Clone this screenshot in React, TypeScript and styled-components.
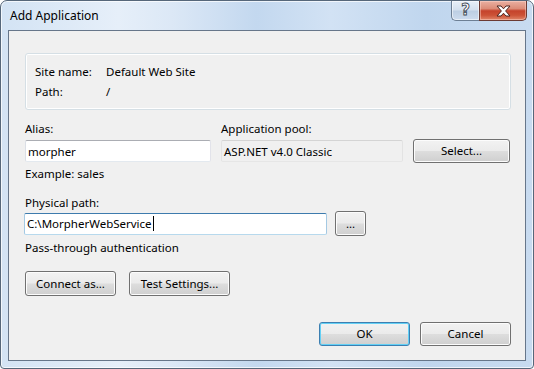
import styled, { createGlobalStyle } from "styled-components";

const GlobalStyle = createGlobalStyle`
  html, body {
    margin: 0;
    padding: 0;
    background: #ffffff;
  }
  body {
    font-family: "Noto Sans", "Open Sans", sans-serif;
    font-size: 11.5px;
    color: #000000;
  }
  * {
    box-sizing: border-box;
  }
`;

function CloseIcon() {
  return (
    <svg width="15" height="12" viewBox="0 0 15 12">
      <path
        d="M1 1 H5 L7.5 3.8 L10 1 H14 L9.6 6 L14 11 H10 L7.5 8.2 L5 11 H1 L5.4 6 Z"
        fill="#ffffff"
        stroke="#4a2520"
        strokeWidth="1"
        strokeLinejoin="round"
      />
    </svg>
  );
}

function App() {
  return (
    <>
      <GlobalStyle />
      <Window>
        <TitleBar>
          <Title>Add Application</Title>
          <CaptionButtons>
            <HelpButton>?</HelpButton>
            <CloseButton>
              <CloseIcon />
            </CloseButton>
          </CaptionButtons>
        </TitleBar>

        <Client>
          <GroupBox>
            <InfoGrid>
              <span>Site name:</span>
              <span>Default Web Site</span>
              <span>Path:</span>
              <span>/</span>
            </InfoGrid>
          </GroupBox>

          <AliasGrid>
            <Label>Alias:</Label>
            <Label>Application pool:</Label>
            <span />
            <TextBox>morpher</TextBox>
            <TextBox $readOnly>ASP.NET v4.0 Classic</TextBox>
            <Button $w={97} $h={24}>
              Select...
            </Button>
          </AliasGrid>

          <Hint>Example: sales</Hint>

          <SectionLabel>Physical path:</SectionLabel>
          <PathRow>
            <TextBox $focused $w={303}>
              C:\MorpherWebService
              <Caret />
            </TextBox>
            <Button $w={31} $h={25}>
              ...
            </Button>
          </PathRow>

          <Hint>Pass-through authentication</Hint>

          <ButtonRow>
            <Button $w={91} $h={25}>
              Connect as...
            </Button>
            <Button $w={101} $h={25}>
              Test Settings...
            </Button>
          </ButtonRow>

          <Footer>
            <Button $w={91} $h={24} $default>
              OK
            </Button>
            <Button $w={91} $h={24}>
              Cancel
            </Button>
          </Footer>
        </Client>
      </Window>
    </>
  );
}

export default App;

const Window = styled.div`
  width: 534px;
  height: 369px;
  display: flex;
  flex-direction: column;
  border: 1px solid #56677a;
  border-radius: 7px 7px 4px 4px;
  background: linear-gradient(
    to right,
    #d3e3f4 0%,
    #e6eff9 22%,
    #dce8f6 32%,
    #c3d8ef 48%,
    #d2e2f4 62%,
    #c0d6ee 80%,
    #c8dbf0 100%
  );
  box-shadow: inset 0 0 0 1px rgba(255, 255, 255, 0.7);
  overflow: hidden;
`;

const TitleBar = styled.div`
  height: 29px;
  display: flex;
  align-items: flex-start;
  padding: 0 6px 0 9px;
`;

const Title = styled.div`
  margin-top: 7px;
  line-height: 16px;
  font-size: 12px;
  color: #000000;
`;

const CaptionButtons = styled.div`
  display: flex;
  margin-left: auto;
  height: 20px;
`;

const HelpButton = styled.div`
  width: 28px;
  height: 20px;
  display: flex;
  align-items: center;
  justify-content: center;
  border: 1px solid #6d7f94;
  border-top: none;
  border-right: none;
  border-radius: 0 0 0 5px;
  background: linear-gradient(#e8eff8 0%, #d4e0ee 48%, #bccee3 52%, #cddcee 100%);
  box-shadow: inset 0 0 0 1px rgba(255, 255, 255, 0.55);
  font-family: "DejaVu Sans", sans-serif;
  font-weight: bold;
  font-size: 15px;
  color: #ffffff;
  -webkit-text-stroke: 0.9px #3f4955;
  line-height: 1;
`;

const CloseButton = styled.div`
  width: 48px;
  height: 20px;
  display: flex;
  align-items: center;
  justify-content: center;
  border: 1px solid #6b3a33;
  border-top: none;
  border-radius: 0 0 5px 0;
  background: linear-gradient(
    #eab0a2 0%,
    #dc8c78 40%,
    #c5432c 52%,
    #cc5236 75%,
    #e0866a 100%
  );
  box-shadow: inset 0 0 0 1px rgba(255, 220, 210, 0.45);
`;

const Client = styled.div`
  flex: 1;
  margin: 0 7px 7px 7px;
  border: 1px solid #66768a;
  background: #f0f0f0;
  display: flex;
  flex-direction: column;
  padding: 22px 14px 0 16px;
`;

const GroupBox = styled.div`
  width: 486px;
  height: 57px;
  border: 1px solid #d5dfe5;
  border-radius: 3px;
  box-shadow: inset 0 0 0 1px #ffffff;
  padding: 10px 0 0 9px;
`;

const InfoGrid = styled.div`
  display: grid;
  grid-template-columns: 71px auto;
  row-gap: 4px;
  line-height: 16px;
`;

const AliasGrid = styled.div`
  margin-top: 11px;
  display: grid;
  grid-template-columns: 186px 182px 97px;
  grid-template-rows: 16px 24px;
  column-gap: 10px;
  row-gap: 2px;
  align-items: center;
`;

const Label = styled.div`
  line-height: 16px;
`;

const Hint = styled.div`
  margin-top: 3px;
  line-height: 16px;
`;

const SectionLabel = styled.div`
  margin-top: 13px;
  line-height: 16px;
`;

const PathRow = styled.div`
  display: flex;
  align-items: center;
  gap: 8px;
  margin-left: -1px;
  height: 25px;
  margin-bottom: 1px;
`;

const TextBox = styled.div<{ $readOnly?: boolean; $focused?: boolean; $w?: number }>`
  width: ${({ $w }) => ($w ? `${$w}px` : "100%")};
  height: 22px;
  display: flex;
  align-items: center;
  padding: 0 2px;
  border: 1px solid;
  border-radius: 2px;
  border-color: ${({ $focused, $readOnly }) =>
    $focused
      ? "#3d7bad #a4c9e3 #b7d9ed #a4c9e3"
      : $readOnly
      ? "#d4d4d4 #e3e3e3 #e6e6e6 #e3e3e3"
      : "#abadb3 #e2e3ea #e3e9ef #dbdfe6"};
  background: ${({ $readOnly }) => ($readOnly ? "#f0f0f0" : "#ffffff")};
  white-space: nowrap;
  overflow: hidden;
`;

const Caret = styled.span`
  display: inline-block;
  width: 1px;
  height: 15px;
  background: #000000;
  margin-left: 1px;
`;

const Button = styled.button<{ $w: number; $h: number; $default?: boolean }>`
  width: ${({ $w }) => $w}px;
  height: ${({ $h }) => $h}px;
  padding: 0;
  font: inherit;
  color: #000000;
  border: 1px solid ${({ $default }) => ($default ? "#3c7fb1" : "#707070")};
  border-radius: 3px;
  background: linear-gradient(#f2f2f2 0%, #ebebeb 48%, #dddddd 52%, #cfcfcf 100%);
  box-shadow: inset 0 0 0 1px ${({ $default }) => ($default ? "#63d0f5" : "#fcfcfc")};
  line-height: 16px;
`;

const ButtonRow = styled.div`
  display: flex;
  gap: 13px;
  margin-top: 15px;
`;

const Footer = styled.div`
  display: flex;
  justify-content: flex-end;
  gap: 10px;
  margin-top: 26px;
`;
